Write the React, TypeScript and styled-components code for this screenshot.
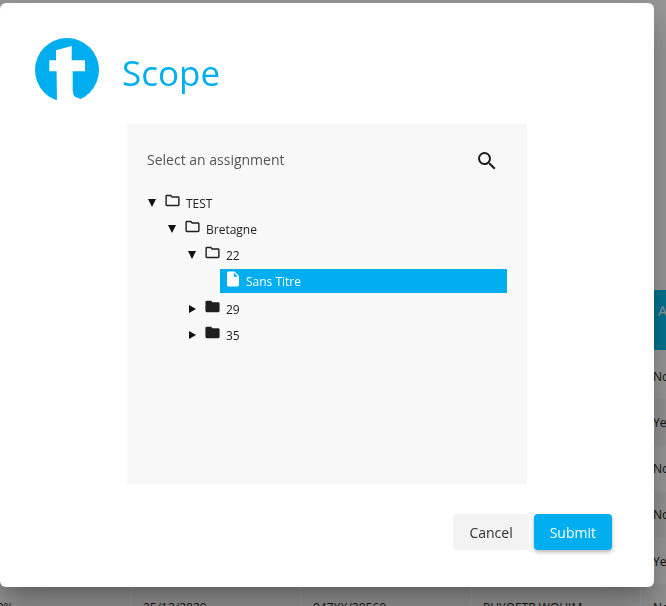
import React, { FC } from "react";
import styled, { createGlobalStyle } from "styled-components";
import { MdFolder, MdInsertDriveFile, MdOutlineFolder, MdSearch } from "react-icons/md";

const ACCENT = "#00aeef";

const GlobalStyle = createGlobalStyle`
  html, body {
    margin: 0;
    height: 100%;
    overflow: hidden;
    background: #fff;
    font-family: "Open Sans", "Liberation Sans", sans-serif;
  }
`;

/* the table behind the dialog */
const Page = styled.div`
  width: 666px;
  height: 606px;
  overflow: hidden;
  padding-top: 290px;
  box-sizing: border-box;
`;

const TableHead = styled.div`
  display: grid;
  grid-template-columns: repeat(5, 170px);
  height: 60px;
  margin: 0 0 3px -38px;
  background: #00c2f8;
  color: #fff;
  font-size: 14px;
`;

const HeadCell = styled.div`
  padding: 11px 0 0 16px;
  white-space: nowrap;
`;

const TableRow = styled.div<{ $odd: boolean }>`
  display: grid;
  grid-template-columns: repeat(5, 170px);
  height: 46.25px;
  margin-left: -38px;
  background: ${(p) => (p.$odd ? "#f6f6f6" : "#fff")};
  color: #222;
  font-size: 12px;
`;

const TableCell = styled.div`
  display: flex;
  align-items: center;
  padding-left: 11px;
  white-space: nowrap;
  box-sizing: border-box;
  border-right: 2px solid #fff;
`;

/* dialog */
const Overlay = styled.div`
  position: fixed;
  inset: 0;
  padding-top: 3px;
  background: rgba(0, 0, 0, 0.4);
`;

const Modal = styled.div`
  width: 654px;
  height: 584px;
  display: flex;
  flex-direction: column;
  box-sizing: border-box;
  padding: 35px 42px 37px 35px;
  background: #fff;
  border-radius: 6px;
  box-shadow: 0 11px 15px -7px rgba(0, 0, 0, 0.2),
    0 24px 38px 3px rgba(0, 0, 0, 0.14), 0 9px 46px 8px rgba(0, 0, 0, 0.12);
`;

const ModalHeader = styled.header`
  display: flex;
  align-items: center;
  gap: 23px;
  height: 64px;
`;

const Title = styled.h1`
  margin: 6px 0 0;
  color: ${ACCENT};
  font-size: 35px;
  font-weight: 400;
  line-height: 58px;
`;

const Panel = styled.section`
  width: 400px;
  height: 360px;
  box-sizing: border-box;
  margin: 22px 0 0 92px;
  padding: 24px 28px 0 20px;
  background: #f8f8f8;
`;

const PanelHeader = styled.div`
  display: flex;
  align-items: center;
  justify-content: space-between;
  height: 24px;
  color: #555;
  font-size: 14px;
`;

const PanelLabel = styled.span`
  margin-bottom: 2px;
`;

const SearchButton = styled.span`
  display: flex;
  margin-top: 2px;
  color: #1c1c1c;
  font-size: 24px;
`;

const Tree = styled.div`
  display: flex;
  flex-direction: column;
  gap: 2px;
  margin: 19px -8px 0 0;
`;

const TreeRow = styled.div<{ $level: number }>`
  display: flex;
  align-items: center;
  height: 24px;
  padding-left: ${(p) => p.$level * 20}px;
  color: #222;
  font-size: 12px;
`;

const ToggleSlot = styled.span`
  display: flex;
  box-sizing: border-box;
  width: 17px;
  padding-left: 1px;
`;

const Toggle = styled.span<{ $open: boolean }>`
  display: block;
  width: 0;
  height: 0;
  ${(p) =>
    p.$open
      ? `border-left: 4px solid transparent;
         border-right: 4px solid transparent;
         border-top: 8px solid #111;`
      : `margin-left: 1px;
         border-top: 4px solid transparent;
         border-bottom: 4px solid transparent;
         border-left: 7px solid #111;`}
`;

const FolderSlot = styled.span`
  display: flex;
  width: 22px;
  margin-bottom: 6px;
  font-size: 17px;
  color: #1f1f1f;
`;

const FileRow = styled.div`
  display: flex;
  align-items: center;
  gap: 4px;
  height: 24px;
  margin: 0 0 2px 73px;
  padding-left: 4px;
  background: ${ACCENT};
  color: #fff;
  font-size: 12px;
`;

const FileIcon = styled.span`
  display: flex;
  margin-bottom: 4px;
  font-size: 18px;
`;

const ModalFooter = styled.footer`
  display: flex;
  justify-content: flex-end;
  gap: 5px;
  margin-top: 30px;
`;

const Button = styled.button<{ $primary?: boolean }>`
  height: 36px;
  padding: 0 16px;
  border: 0;
  border-radius: 4px;
  font-family: inherit;
  font-size: 14px;
  background: ${(p) => (p.$primary ? ACCENT : "#f3f3f3")};
  color: ${(p) => (p.$primary ? "#fff" : "#333")};
  box-shadow: ${(p) => (p.$primary ? "0 2px 4px rgba(0, 0, 0, 0.3)" : "none")};
`;

const Logo: FC = () => (
  <svg width="64" height="64" viewBox="0 0 64 64" style={{ flexShrink: 0 }}>
    <circle cx="32" cy="32" r="32" fill={ACCENT} />
    <path
      fill="#fff"
      d="M21 12.3 L36.7 8 V22.3 H50 V33.3 H37.7 V52 C37.7 57 40 60 44 60 L48 66 H22 L21.6 33.3 H14.3 V22.3 H21 Z"
    />
  </svg>
);

const folders = [
  { name: "TEST", level: 0, open: true },
  { name: "Bretagne", level: 1, open: true },
  { name: "22", level: 2, open: true, file: "Sans Titre" },
  { name: "29", level: 2, open: false },
  { name: "35", level: 2, open: false },
];

const rows = [
  ["75.50%", "12/03/2020", "047XX/29561", "PUYOETR WOHIM", "No"],
  ["100.0%", "18/05/2020", "047XX/29562", "PUYOETR WOHIM", "Yes"],
  ["50.50%", "02/07/2020", "047XX/29563", "PUYOETR WOHIM", "No"],
  ["25.50%", "14/09/2020", "047XX/29564", "PUYOETR WOHIM", "No"],
  ["75.50%", "30/11/2020", "047XX/29565", "PUYOETR WOHIM", "Yes"],
  ["33.50%", "25/12/2020", "047XX/29569", "PUYOETR WOHIM", "No"],
];

export default function App() {
  return (
    <>
      <GlobalStyle />
      <Page>
        <TableHead>
          <HeadCell>Progress</HeadCell>
          <HeadCell>Date</HeadCell>
          <HeadCell>Reference</HeadCell>
          <HeadCell>Name</HeadCell>
          <HeadCell>Active</HeadCell>
        </TableHead>
        {rows.map((row, i) => (
          <TableRow key={i} $odd={i % 2 === 1}>
            {row.map((cell, j) => (
              <TableCell key={j}>{cell}</TableCell>
            ))}
          </TableRow>
        ))}
      </Page>
      <Overlay>
        <Modal>
          <ModalHeader>
            <Logo />
            <Title>Scope</Title>
          </ModalHeader>
          <Panel>
            <PanelHeader>
              <PanelLabel>Select an assignment</PanelLabel>
              <SearchButton>
                <MdSearch />
              </SearchButton>
            </PanelHeader>
            <Tree>
              {folders.map((folder) => (
                <React.Fragment key={folder.name}>
                  <TreeRow $level={folder.level}>
                    <ToggleSlot>
                      <Toggle $open={folder.open} />
                    </ToggleSlot>
                    <FolderSlot>
                      {folder.open ? <MdOutlineFolder /> : <MdFolder />}
                    </FolderSlot>
                    {folder.name}
                  </TreeRow>
                  {folder.file && (
                    <FileRow>
                      <FileIcon>
                        <MdInsertDriveFile />
                      </FileIcon>
                      {folder.file}
                    </FileRow>
                  )}
                </React.Fragment>
              ))}
            </Tree>
          </Panel>
          <ModalFooter>
            <Button>Cancel</Button>
            <Button $primary>Submit</Button>
          </ModalFooter>
        </Modal>
      </Overlay>
    </>
  );
}
